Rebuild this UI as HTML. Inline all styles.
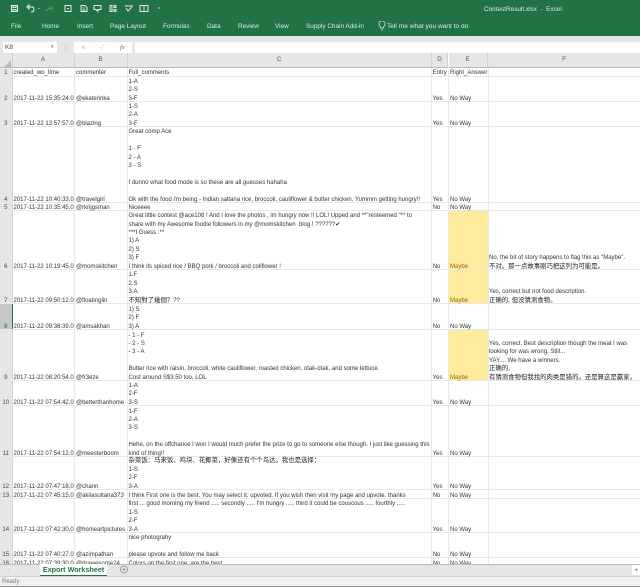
<!DOCTYPE html>
<html><head><meta charset="utf-8">
<style>
html,body{margin:0;padding:0;background:#fff}
#p{position:relative;width:640px;height:587px;overflow:hidden;font-family:"Liberation Sans","Noto Sans CJK SC",sans-serif;font-size:6px;color:#333;background:#fff}
#p div{position:absolute}
#top{left:0;top:0;width:640px;height:36px;background:#217346}
.t{color:#dcebe2;font-size:6.4px;top:23px;white-space:pre}
#grid{left:0;top:68px;width:640px;height:496px;overflow:hidden;filter:blur(.25px)}
.r{left:0;width:640px;border-bottom:1px solid #e8e8e8;box-sizing:border-box}
.r div{bottom:-2px;line-height:8.4px;white-space:pre}
.r .n{left:0;width:12.5px;top:0;bottom:0;background:#e6e6e6;color:#444;border-right:1px solid #d4d4d4;box-sizing:border-box;display:flex;align-items:flex-end;justify-content:center;line-height:4.4px}
.a{left:13.5px}.b{left:76px}.c{left:128.5px}.d{left:432.7px}.e{left:450px}.f{left:489px}
.r .y{left:448.5px;width:39.5px;top:0;bottom:0;background:#ffeb9c;color:#9c6500;box-sizing:border-box}
.r .y div{left:1.5px}
.v{top:0;width:1px;height:496px;background:#e8e8e8}
.z{font-size:6.4px;color:#222}
.h{top:53px;height:15px;background:#e6e6e6;border-right:1px solid #d0d0d0;border-bottom:1px solid #bbb;box-sizing:border-box;text-align:center;line-height:14px;color:#555;font-size:6.3px}
</style></head><body><div id="p">
<div id="top"></div>
<svg style="position:absolute;left:0;top:0;filter:blur(.3px)" width="170" height="16" fill="none" stroke="#e4efe8" stroke-width="1">
<path d="M11.5 5.5h6v6h-6zM13 5.5v2h3v-2M13 11.5v-2h3v2"/>
<path d="M27 7l2-2v4zM29 7h3q2 0 2 2.500t-3 2.500"/>
<path d="M38 8l2 0-1 1z" fill="#e4efe8" stroke="none"/>
<path d="M46 11q3-4 6-3M52 6v3h-3" stroke="#5c9a78"/>
<path d="M65 5.500h6v6h-6zM67 8.500h2" /><path d="M81 5.500h4l2 2v4h-6zM82.500 8h2M82.500 10h3"/><path d="M94 5.500h7v4h-3v2l-2-2h-2z"/><path d="M110 5.500h2v6h-2zM114 5.500h2v2h-2zM114 9.500h2v2h-2z"/><path d="M125 6h8M126 8l2 3 4-4"/><path d="M140 5.500h8v6h-8zM144 5.500v6"/>
<path d="M158 8h2" />
</svg>
<div class="t" style="left:484px;top:6px;white-space:pre">ContestResult.xlsx  -  Excel</div>
<div class="t" style="left:11px">File</div>
<div class="t" style="left:42px">Home</div>
<div class="t" style="left:77px">Insert</div>
<div class="t" style="left:110px">Page Layout</div>
<div class="t" style="left:163px">Formulas</div>
<div class="t" style="left:207px">Data</div>
<div class="t" style="left:238px">Review</div>
<div class="t" style="left:275px">View</div>
<div class="t" style="left:306px">Supply Chain Add-in</div>
<svg style="position:absolute;left:378px;top:21px" width="8" height="10" fill="none" stroke="#dcebe2" stroke-width=".8"><path d="M2.500 7q0-1.500-1-2.500a3 3 0 1 1 5 0q-1 1-1 2.500zM3 9h2"/></svg>
<div class="t" style="left:387px;font-size:6.6px">Tell me what you want to do</div>
<div style="left:0;top:36px;width:640px;height:17px;background:#e6e6e6"></div>
<div style="left:3px;top:42px;width:54px;height:11px;background:#fff;line-height:11px;padding-left:2px;box-sizing:border-box;font-size:6.5px;color:#444">K8</div>
<div style="left:51px;top:42px;line-height:10px;font-size:5px;color:#777">▾</div>
<div style="left:65px;top:44px;width:1px;height:7px;border-left:1px dotted #bbb"></div>
<div style="left:74px;top:42px;width:58px;height:11px;background:#fff"></div>
<div style="left:81px;top:42px;line-height:11px;color:#bbb;font-size:8px">×</div>
<div style="left:100px;top:42px;line-height:11px;color:#ccc;font-size:7px">✓</div>
<div style="left:120px;top:42px;line-height:11px;color:#666;font-size:6.500px;font-style:italic;font-family:'Liberation Serif',serif">fx</div>
<div style="left:135px;top:42px;width:505px;height:11px;background:#fff"></div>
<div class="h" style="left:0;width:12.500px"></div>
<svg style="position:absolute;left:4px;top:60px" width="8" height="7"><path d="M7 0v7H0z" fill="#bbb"/></svg>
<div class="h" style="left:12.500px;width:62px">A</div>
<div class="h" style="left:74.500px;width:53px">B</div>
<div class="h" style="left:127.500px;width:304.200px">C</div>
<div class="h" style="left:431.700px;width:16.800px">D</div>
<div class="h" style="left:448.500px;width:39.500px">E</div>
<div class="h" style="left:488px;width:152px;border-right:0">F</div>
<div id="grid">
<div class="v" style="left:74px"></div><div class="v" style="left:127px"></div><div class="v" style="left:431px"></div><div class="v" style="left:448px"></div><div class="v" style="left:487.500px"></div>
<div class="r" style="top:0;height:8.500px"><div class="n">1</div><div class="a">created_wo_time</div><div class="b">commenter</div><div class="c">Full_comments</div><div class="d">Entry</div><div class="e">Right_Answer</div></div>
<div class="r" style="top:8.500px;height:25.500px"><div class="n">2</div><div class="a">2017-11-22 15:35:24.0</div><div class="b">@ekaterinka</div><div class="c">1-A
2-S
3-F</div><div class="d">Yes</div><div class="e">No Way</div></div>
<div class="r" style="top:34px;height:25px"><div class="n">3</div><div class="a">2017-11-22 13:57:57.0</div><div class="b">@blazing</div><div class="c">1-S
2-A
3-F</div><div class="d">Yes</div><div class="e">No Way</div></div>
<div class="r" style="top:59px;height:76px"><div class="n">4</div><div class="a">2017-11-22 10:40:33.0</div><div class="b">@travelgirl</div><div class="c">Great comp Ace

1 - F
2 - A
3 - S

I dunno what food mode is so these are all guesses hahaha

Ok with the food i'm being - Indian saltana rice, broccoli, cauliflower &amp; butter chicken. Yummm getting hungry!!</div><div class="d">Yes</div><div class="e">No Way</div></div>
<div class="r" style="top:135px;height:8px"><div class="n">5</div><div class="a">2017-11-22 10:35:45.0</div><div class="b">@rkrijgsman</div><div class="c">Niceeee</div><div class="d">No</div><div class="e">No Way</div></div>
<div class="r" style="top:143px;height:59px"><div class="n">6</div><div class="a">2017-11-22 10:19:45.0</div><div class="b">@momskitchen</div><div class="y"><div>Maybe</div></div><div class="c">Great little contest @ace108 ! And I love the photos , im hungry now !! LOL! Upped and **"resteemed "** to
share with my Awesome foodie followers in my @momskitchen  blog ! ??????✔
***I Guess :**
1) A
2) S
3) F
I think its spiced rice / BBQ pork / broccoli and coliflower !</div><div class="d">No</div><div class="f">No, the bit of story happens to flag this as "Maybe".
<span class="z">不对。那一点故事刚巧把这列为可能是。</span></div></div>
<div class="r" style="top:202px;height:34px"><div class="n">7</div><div class="a">2017-11-22 09:50:12.0</div><div class="b">@floatinglin</div><div class="y"><div>Maybe</div></div><div class="c">1.F
2.S
3.A
<span class="z">不知對了幾個？</span>??</div><div class="d">No</div><div class="f">Yes, correct but not food description.
<span class="z">正确的, 但没猜测食物。</span></div></div>
<div class="r" style="top:236px;height:26px"><div class="n" style="background:#c6c6c6;border-right:1px solid #217346;color:#217346">8</div><div class="a">2017-11-22 09:36:39.0</div><div class="b">@amsakhan</div><div class="c">1) S
2) F
3) A</div><div class="d">No</div><div class="e">No Way</div></div>
<div class="r" style="top:262px;height:51px"><div class="n">9</div><div class="a">2017-11-22 08:20:54.0</div><div class="b">@fr3eze</div><div class="y"><div>Maybe</div></div><div class="c">- 1 - F
- 2 - S
- 3 - A

Butter rice with raisin, broccoli, white cauliflower, roasted chicken, otak-otak, and some lettuce.
Cost around S$3.50 too, LOL</div><div class="d">Yes</div><div class="f">Yes, correct. Best description though the meat I was
looking for was wrong. Still...
YAY.... We have a winners.
<span class="z">正确的,
有猜测食物但我找的肉类是错的。还是算这是赢家。</span></div></div>
<div class="r" style="top:313px;height:25px"><div class="n">10</div><div class="a">2017-11-22 07:54:42.0</div><div class="b">@betterthanhome</div><div class="c">1-A
2-F
3-S</div><div class="d">Yes</div><div class="e">No Way</div></div>
<div class="r" style="top:338px;height:51px"><div class="n">11</div><div class="a">2017-11-22 07:54:12.0</div><div class="b">@meesterboom</div><div class="c">1-F
2-A
3-S

Hehe, on the offchance I won I would much prefer the prize to go to someone else though. I just like guessing this
kind of thing!!</div><div class="d">Yes</div><div class="e">No Way</div></div>
<div class="r" style="top:389px;height:33px"><div class="n">12</div><div class="a">2017-11-22 07:47:18.0</div><div class="b">@chann</div><div class="c"><span class="z">杂菜饭：马来饭、鸡块、花椰菜，好像还有个个鸟达。我也是选择：</span>
1-S
2-F
3-A</div><div class="d">Yes</div><div class="e">No Way</div></div>
<div class="r" style="top:422px;height:9px"><div class="n">13</div><div class="a">2017-11-22 07:45:15.0</div><div class="b">@akilasultana373</div><div class="c">I think First one is the best. You may select it. upvoted. If you wish then visit my page and upvote. thanks</div><div class="d">No</div><div class="e">No Way</div></div>
<div class="r" style="top:431px;height:34px"><div class="n">14</div><div class="a">2017-11-22 07:42:30.0</div><div class="b">@homeartpictures</div><div class="c">first ... good morning my friend ..... secondly ..... I'm hungry ..... third it could be couscous ..... fourthly .....
1-S
2-F
3-A</div><div class="d">Yes</div><div class="e">No Way</div></div>
<div class="r" style="top:465px;height:25px"><div class="n">15</div><div class="a">2017-11-22 07:40:27.0</div><div class="b">@azimpathan</div><div class="c">nice photograhy

please upvote and follow me back</div><div class="d">No</div><div class="e">No Way</div></div>
<div class="r" style="top:490px;height:9px"><div class="n">16</div><div class="a">2017-11-22 07:39:30.0</div><div class="b">@drawesome24</div><div class="c">Colors on the first one ,are the best</div><div class="d">No</div><div class="e">No Way</div></div>
</div>
<div style="left:0;top:564px;width:640px;height:12px;background:#e6e6e6;border-top:1px solid #bbb;box-sizing:border-box"></div>
<div style="left:40px;top:564px;width:67px;height:12px;background:#fff;border-bottom:1px solid #217346;box-sizing:border-box;text-align:center;line-height:11px;font-weight:bold;font-size:7.200px;color:#217346">Export Worksheet</div>
<svg style="position:absolute;left:119px;top:564px" width="10" height="11" fill="none" stroke="#888" stroke-width=".8"><circle cx="5" cy="5.500" r="3.500"/><path d="M3.500 5.500h3M5 4v3"/></svg>
<div style="left:8px;top:564px;line-height:12px;color:#bbb;font-size:5px">‹</div>
<div style="left:21px;top:564px;line-height:12px;color:#bbb;font-size:5px">›</div>
<div style="left:632px;top:565px;width:8px;height:10px;background:#fff;color:#666;font-size:5px;line-height:10px;text-align:center">◂</div>
<div style="left:0;top:576px;width:640px;height:11px;background:#f0f0f0;line-height:10px;padding-left:2px;box-sizing:border-box;color:#777;font-size:6px;border-top:1px solid #d0d0d0;border-bottom:1px solid #999">Ready</div>
</div></body></html>
